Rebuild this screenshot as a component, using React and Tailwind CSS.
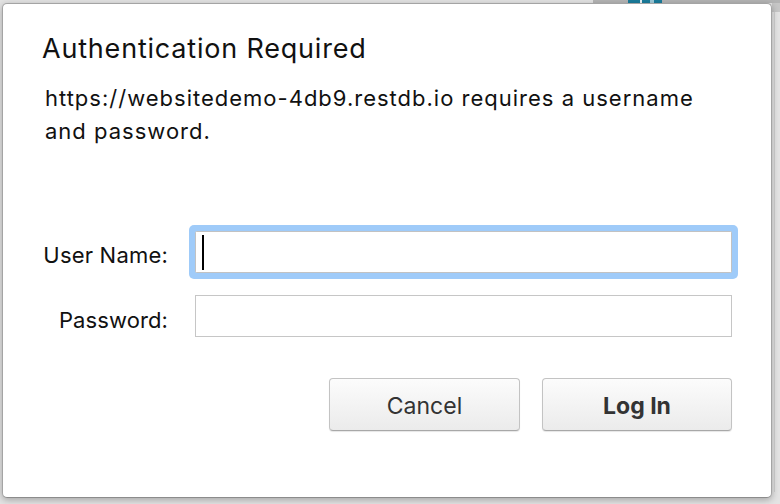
import React from "react";

export default function App() {
  const font = { fontFamily: "Inter, 'Liberation Sans', Arial, sans-serif" };
  return (
    <div
      className="relative w-[780px] h-[504px] overflow-hidden bg-[#e3e3e3] pl-[2px] pt-[3px]"
      style={font}
    >
      {/* background window bits behind the sheet */}
      <div className="absolute left-[593px] top-0 w-[187px] h-[3px] bg-[#b4b4b4]" />
      <div className="absolute left-[628px] top-0 w-[34px] h-[4px] bg-[#1b7d9c] flex">
        <div className="ml-[12px] w-[2px] h-full bg-[#e8f2f6]" />
        <div className="ml-[8px] w-[4px] h-full bg-[#9cc9d8]" />
      </div>
      <div className="absolute left-[772px] top-[3px] w-[8px] h-[9px] bg-[#c6c6c6]" />
      <div className="absolute left-[774px] top-[12px] w-[1px] h-[480px] bg-[#cfcfcf]" />

      <div className="relative w-[770px] h-[495px] bg-white rounded-[5px] border border-[#a4a4a4] border-b-[#8c8c8c] shadow-[0_2px_7px_rgba(0,0,0,0.28)] flex flex-col pl-[39px] pt-[29px]">
        <h1 className="text-[27px] leading-[32px] font-normal text-[#111] tracking-[0.8px] whitespace-nowrap">
          Authentication Required
        </h1>
        <p className="mt-[17px] ml-[3px] text-[22px] leading-[33px] tracking-[1px] text-[#111] whitespace-nowrap">
          https://websitedemo-4db9.restdb.io requires a username
          <br />
          and password.
        </p>

        <div className="mt-[83px] grid grid-cols-[126px_537px] gap-x-[27px] gap-y-[22px]">
          <label className="h-[42px] text-right whitespace-nowrap text-[22px] leading-[48px] tracking-[0.2px] text-[#111]">
            User Name:
          </label>
          <div className="h-[42px] border border-[#c2c2c2] rounded-[1.5px] bg-white shadow-[0_0_0_6px_#9fcbf9] flex items-center pl-[6px]">
            <div className="w-[2px] h-[35px] bg-black" />
          </div>

          <label className="h-[42px] text-right whitespace-nowrap text-[22px] leading-[50px] tracking-[0.1px] text-[#111]">
            Password:
          </label>
          <div className="h-[42px] border border-[#c6c6c6] bg-white" />
        </div>

        <div className="mt-[41px] flex justify-end gap-[22px] pr-[39px]">
          <button className="w-[191px] h-[53px] pt-[4px] flex items-center justify-center rounded-[4px] border border-[#c3c3c3] border-b-[#a8a8a8] bg-linear-to-b from-[#fcfcfc] to-[#ebebeb] shadow-[0_1px_1px_rgba(0,0,0,0.1)] text-[23px] text-[#333]">
            Cancel
          </button>
          <button className="w-[190px] h-[53px] pt-[4px] flex items-center justify-center rounded-[4px] border border-[#c3c3c3] border-b-[#a8a8a8] bg-linear-to-b from-[#fcfcfc] to-[#ebebeb] shadow-[0_1px_1px_rgba(0,0,0,0.1)] text-[23px] font-bold text-[#333]">
            Log In
          </button>
        </div>
      </div>
    </div>
  );
}
